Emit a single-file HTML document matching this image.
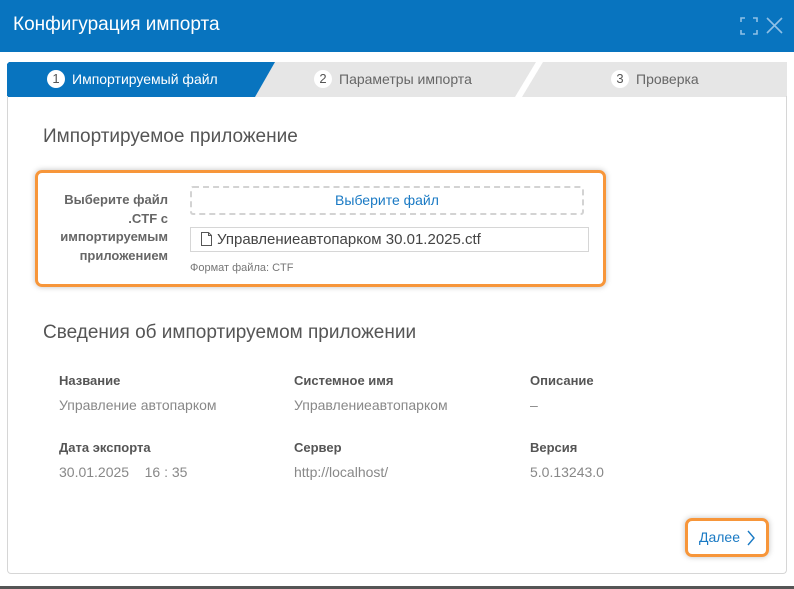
<!DOCTYPE html>
<html><head><meta charset="utf-8"><style>
*{box-sizing:border-box;margin:0;padding:0}
body{width:794px;height:589px;background:#fff;font-family:"Liberation Sans","DejaVu Sans",sans-serif;position:relative;overflow:hidden}
.hdr{position:absolute;left:0;top:0;width:794px;height:52px;background:#0874bf;color:#fff;font-size:19px;line-height:50px;padding-left:13px}
.panel{position:absolute;left:7px;top:96px;width:780px;height:478px;border:1px solid #d6d6d6;border-top:none;border-radius:0 0 4px 4px}
.tabs{position:absolute;left:7px;top:62px;width:780px;height:35px}
.tl{position:absolute;top:0;height:35px;line-height:35px;font-size:14px}
.num{display:inline-block;width:18px;height:18px;border-radius:50%;background:#fff;color:#555;text-align:center;line-height:18px;font-size:13px;margin-right:7px;vertical-align:1px}
h2{position:absolute;font-weight:normal;font-size:19px;color:#555}
.hl{position:absolute;border:3px solid #f7963a;border-radius:7px;box-shadow:0 0 6px rgba(0,0,0,.25)}
.lbl{position:absolute;font-weight:bold;color:#555;font-size:13px}
.val{position:absolute;color:#888;font-size:14px}
</style></head><body>
<div class="hdr">Конфигурация импорта
<svg style="position:absolute;left:740px;top:17px" width="18" height="18" viewBox="0 0 18 18" fill="none" stroke="#8fc0e6" stroke-width="1.6"><path d="M1 5V1h4M13 1h4v4M17 13v4h-4M5 17H1v-4"/></svg>
<svg style="position:absolute;left:766px;top:17px" width="17" height="17" viewBox="0 0 17 17" stroke="#8fc0e6" stroke-width="1.6"><path d="M1 1L16 16M16 1L1 16"/></svg>
</div>
<div class="tabs">
<svg width="780" height="35" style="position:absolute;left:0;top:0">
<polygon points="266,0 529,0 508,35 246,35" fill="#e6e6e6"/>
<polygon points="536,0 780,0 780,35 515,35" fill="#e6e6e6"/>
<polygon points="2,0 268,0 248,35 0,35 0,2" fill="#0874bf"/>
</svg>
<div class="tl" style="left:40px;color:#fff"><span class="num">1</span>Импортируемый файл</div>
<div class="tl" style="left:307px;color:#666"><span class="num">2</span>Параметры импорта</div>
<div class="tl" style="left:604px;color:#666"><span class="num">3</span>Проверка</div>
</div>
<div class="panel"></div>
<h2 style="left:43px;top:126px">Импортируемое приложение</h2>
<div class="hl" style="left:35px;top:170px;width:571px;height:117px"></div>
<div class="lbl" style="left:40px;top:191px;width:128px;text-align:right;line-height:18.5px;color:#666">Выберите файл .CTF с импортируемым приложением</div>
<div style="position:absolute;left:190px;top:186px;width:394px;height:29px;border:2px dashed #d3d3d3;border-radius:3px;text-align:center;line-height:25px;color:#1a7ac4;font-size:14px">Выберите файл</div>
<div style="position:absolute;left:190px;top:227px;width:399px;height:25px;border:1px solid #d6d6d6;font-size:15px;color:#444;line-height:23px;padding-left:10px">
<svg width="11" height="14" viewBox="0 0 11 14" style="vertical-align:-2px;margin-right:5px" fill="none" stroke="#555" stroke-width="1"><path d="M.5.5h7l3 3v10H.5z M7.5.5v3h3"/></svg>Управлениеавтопарком 30.01.2025.ctf</div>
<div style="position:absolute;left:190px;top:262px;font-size:11px;color:#777">Формат файла: CTF</div>
<h2 style="left:43px;top:322px">Сведения об импортируемом приложении</h2>
<div class="lbl" style="left:59px;top:373px">Название</div>
<div class="lbl" style="left:294px;top:373px">Системное имя</div>
<div class="lbl" style="left:530px;top:373px">Описание</div>
<div class="val" style="left:59px;top:397px">Управление автопарком</div>
<div class="val" style="left:294px;top:397px">Управлениеавтопарком</div>
<div class="val" style="left:530px;top:397px">–</div>
<div class="lbl" style="left:59px;top:440px">Дата экспорта</div>
<div class="lbl" style="left:294px;top:440px">Сервер</div>
<div class="lbl" style="left:530px;top:440px">Версия</div>
<div class="val" style="left:59px;top:464px">30.01.2025&nbsp;&nbsp;&nbsp;&nbsp;16 : 35</div>
<div class="val" style="left:294px;top:464px">http://localhost/</div>
<div class="val" style="left:530px;top:464px">5.0.13243.0</div>
<div class="hl" style="left:685px;top:518px;width:84px;height:39px"></div>
<div style="position:absolute;left:699px;top:529px;color:#1a7ac4;font-size:14px">Далее</div>
<svg style="position:absolute;left:746px;top:530px" width="10" height="16" viewBox="0 0 10 16" fill="none" stroke="#1a7ac4" stroke-width="1.4"><path d="M2 1l6 7-6 7"/></svg>
<div style="position:absolute;left:0;top:586px;width:794px;height:3px;background:#555"></div>
</body></html>
